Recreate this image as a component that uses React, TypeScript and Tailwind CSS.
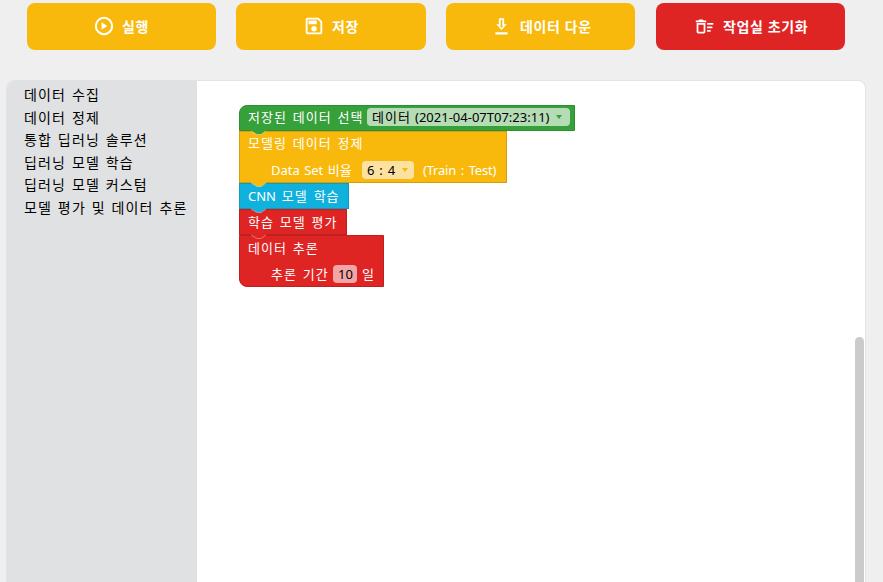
import React from "react";

const FONT = "font-['Noto_Sans','Noto_Sans_CJK_KR',sans-serif]";

function Icon({ d, className }: { d: string; className: string }) {
  return (
    <svg viewBox="0 0 24 24" className={`shrink-0 fill-white ${className}`}>
      <path fillRule="evenodd" d={d} />
    </svg>
  );
}

const ICONS = {
  play: "M12 2a10 10 0 1 0 0 20a10 10 0 1 0 0-20zm0 2.2a7.8 7.8 0 1 1 0 15.6a7.8 7.8 0 1 1 0-15.6zM9.3 7.8v8.4l6.2-4.2z",
  save: "M17 3H5a2 2 0 0 0-2 2v14a2 2 0 0 0 2 2h14a2 2 0 0 0 2-2V7zm2 16H5V5h11.17L19 7.83zm-7-7a3 3 0 1 0 0 6 3 3 0 0 0 0-6zM6 6h9v4H6z",
  down: "M18 9.500h-3V2.500H9v7H6l6 6.500zm-7 2V4.500h2v7h1L12 13.500 10 11.500zM5 18.500h14V21H5z",
  sweep:
    "M15 16h4v2h-4zm0-8h7v2h-7zm0 4h6v2h-6zM3 18c0 1.100.9 2 2 2h6c1.100 0 2-.9 2-2V8H3zm2-8h6v8H5zm5-6H6L5 5H2v2h12V5h-3z",
};

function ActionButton({ color, icon, iconClass, label, className }: { color: string; icon: string; iconClass: string; label: string; className: string }) {
  return (
    <button className={`flex h-[47px] items-center rounded-lg text-white ${color} ${className}`}>
      <Icon d={icon} className={iconClass} />
      <span className="whitespace-nowrap text-[14px] font-bold leading-5 tracking-[0.6px]">{label}</span>
    </button>
  );
}

const CATEGORIES = ["데이터 수집", "데이터 정제", "통합 딥러닝 솔루션", "딥러닝 모델 학습", "딥러닝 모델 커스텀", "모델 평가 및 데이터 추론"];

function Block({ fill, edge, className, tab, children }: { fill: string; edge: string; className: string; tab?: string; children: React.ReactNode }) {
  return (
    <div className={`relative border ${fill} ${edge} ${className}`}>
      {children}
      {tab && (
        <svg viewBox="0 0 17 6" className={`absolute -bottom-[6px] left-[10px] z-10 h-[6px] w-[17px] ${tab}`}>
          <path d="M0 0H17L11 4.500H7z" />
          <path d="M1 1L7 4.500H11L16 1" fill="none" stroke="#fff" strokeOpacity=".35" />
        </svg>
      )}
    </div>
  );
}

function Row({ className = "", children }: { className?: string; children: React.ReactNode }) {
  return <div className={`flex h-[26px] items-center whitespace-nowrap ${className}`}>{children}</div>;
}

export default function App() {
  return (
    <div className={`h-[582px] w-[883px] overflow-hidden bg-[#efefef] ${FONT}`}>
      <div className="flex gap-[21px] pl-[27px] pt-[3px]">
        <ActionButton color="bg-[#f8b90c]" icon={ICONS.play} iconClass="mb-px mr-[7px] size-[22px]" label="실행" className="w-[189px] pl-[66px]" />
        <ActionButton color="bg-[#f8b90c]" icon={ICONS.save} iconClass="mb-px mr-[7px] size-[22px]" label="저장" className="-ml-px w-[190px] pl-[67px]" />
        <ActionButton color="bg-[#f8b90c]" icon={ICONS.down} iconClass="mb-px mr-[8px] size-[21px]" label="데이터 다운" className="-ml-px w-[189px] pl-[45px]" />
        <ActionButton color="bg-[#df2424]" icon={ICONS.sweep} iconClass="mb-px mr-[8px] size-[21px]" label="작업실 초기화" className="w-[189px] pl-[38px]" />
      </div>

      <div className="ml-[6px] mt-[30px] flex h-[520px] w-[860px] overflow-hidden rounded-lg border border-[#e3e3e3] bg-white">
        <nav className="w-[190px] shrink-0 bg-[#e0e1e2] pl-[17px] pt-[3px]">
          {CATEGORIES.map((name) => (
            <div key={name} className="h-[22.5px] whitespace-nowrap text-[14px] leading-[22.5px] tracking-[1.15px] text-black [word-spacing:1px]">
              {name}
            </div>
          ))}
        </nav>

        <div className="flex grow justify-between">
          <div className="flex flex-col items-start pl-[42px] pt-[24px] text-[13px] leading-[18px] tracking-[1px] text-white [word-spacing:1.5px]">
            <Block fill="bg-[#36a03a]" edge="border-[#2c8f31]" className="h-[26px] w-[336px] rounded-tl-lg" tab="fill-[#36a03a]">
              <Row className="-mt-[2px] pl-2">
                <span className="w-[119px]">저장된 데이터 선택</span>
                <span className="flex h-[18px] w-[203px] items-center rounded bg-[#b5dcb5] pl-[5px] text-black">
                  <span className="w-[43px]">데이터</span>
                  <span className="w-[141px] tracking-[0px]">(2021-04-07T07:23:11)</span>
                  <svg viewBox="0 0 6 4" className="h-1 w-1.5 fill-[#36a03a]"><path d="M0 0H6L3 4z" /></svg>
                </span>
              </Row>
            </Block>
            <Block fill="bg-[#f8b90c]" edge="border-[#d59e0b]" className="h-[52px] w-[268px]" tab="fill-[#f8b90c]">
              <Row className="-mt-[2px] pl-2">모델링 데이터 정제</Row>
              <Row className="pl-[31px] pt-px">
                <span className="w-[91px] tracking-[0px] [word-spacing:1px]">Data Set 비율</span>
                <span className="flex h-[18px] w-[52px] items-center rounded bg-[#fde1a0] pl-[5px] text-black">
                  <span className="w-[35px] tracking-[0px]">6 : 4</span>
                  <svg viewBox="0 0 6 4" className="h-1 w-1.5 fill-[#f8b90c]"><path d="M0 0H6L3 4z" /></svg>
                </span>
                <span className="ml-[9px] tracking-[-0.2px]">(Train : Test)</span>
              </Row>
            </Block>
            <Block fill="bg-[#10b1dd]" edge="border-[#1299c0]" className="h-[26px] w-[110px]" tab="fill-[#10b1dd]">
              <Row className="-mt-px pl-2">
                <span><span className="tracking-[0px]">CNN</span> 모델 학습</span>
              </Row>
            </Block>
            <Block fill="bg-[#df2424]" edge="border-[#bd2020]" className="h-[26px] w-[108px]" tab="fill-[#df2424]">
              <Row className="-mt-px pl-2">학습 모델 평가</Row>
            </Block>
            <Block fill="bg-[#df2424]" edge="border-[#bd2020]" className="h-[52px] w-[145px] rounded-bl-lg">
              <Row className="-mt-px pl-2">데이터 추론</Row>
              <Row className="pl-[31px]">
                <span className="w-[62px]">추론 기간</span>
                <span className="h-[18px] w-[24px] rounded bg-[#f4a6a6] pl-[5px] tracking-[0px] text-black">10</span>
                <span className="ml-[5px]">일</span>
              </Row>
            </Block>
          </div>
          <div className="mr-px mt-[256px] w-[9px] shrink-0 rounded-t-full bg-[#cbcbcb]" />
        </div>
      </div>
    </div>
  );
}
